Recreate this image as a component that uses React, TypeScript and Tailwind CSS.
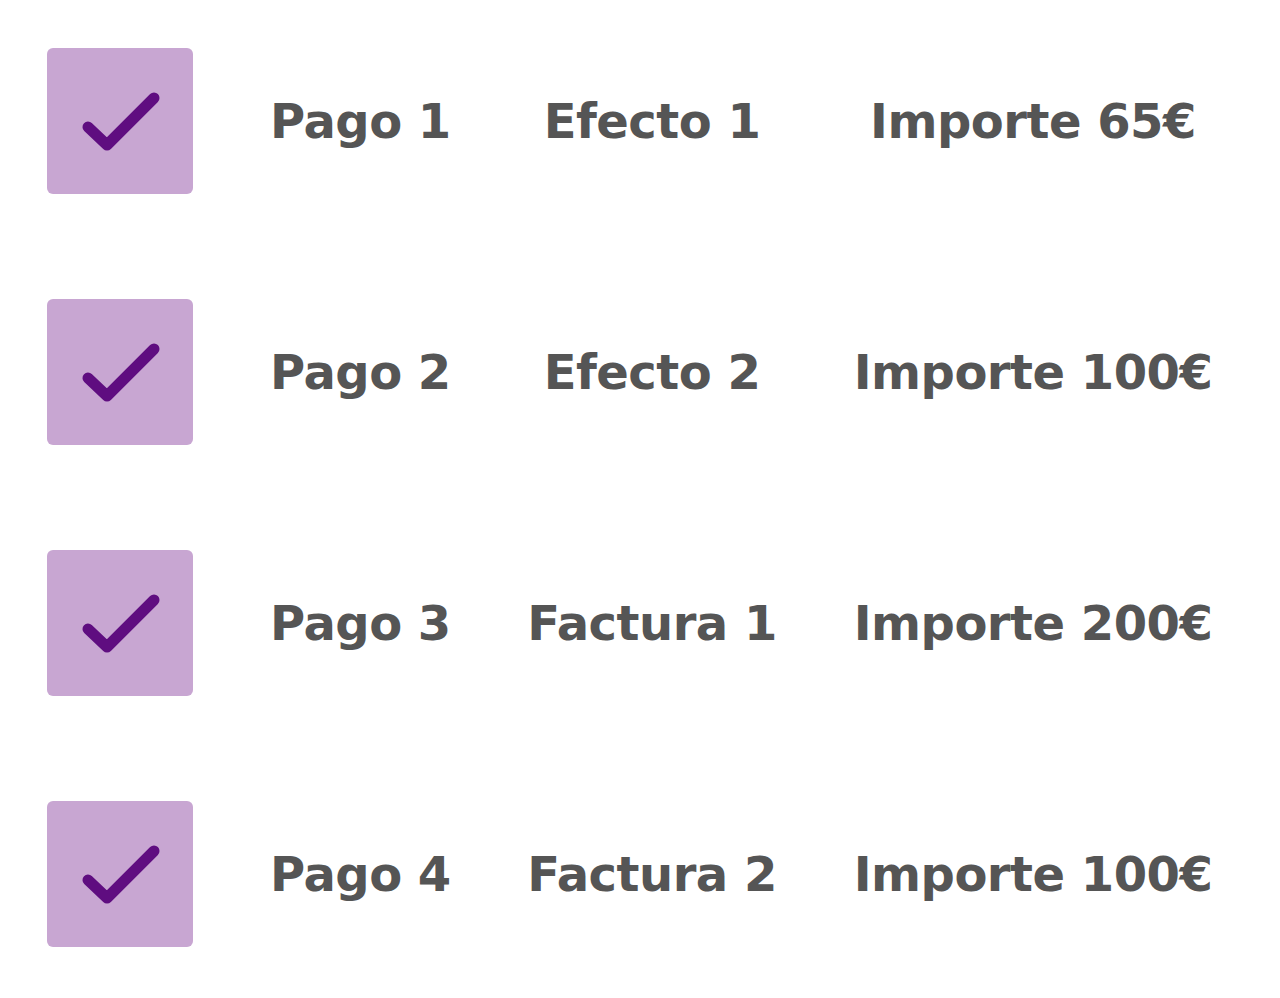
const rows = [
  { pago: 'Pago 1', doc: 'Efecto 1', importe: 'Importe 65€' },
  { pago: 'Pago 2', doc: 'Efecto 2', importe: 'Importe 100€' },
  { pago: 'Pago 3', doc: 'Factura 1', importe: 'Importe 200€' },
  { pago: 'Pago 4', doc: 'Factura 2', importe: 'Importe 100€' },
]

function CheckBox() {
  return (
    <div className="flex h-[146px] w-[146px] shrink-0 items-center justify-center rounded-[6px] bg-[#c8a6d2]">
      <svg width="146" height="146" viewBox="0 0 146 146">
        <path
          d="M41 79 L60 97 L107 50"
          fill="none"
          stroke="#5f0d80"
          strokeWidth="11"
          strokeLinecap="round"
          strokeLinejoin="round"
        />
      </svg>
    </div>
  )
}

export default function App() {
  return (
    <div className="flex h-[998px] w-[1280px] flex-col gap-[105px] bg-white pl-[47px] pt-[48px] font-['DejaVu_Sans',sans-serif] font-bold text-[#555555]">
      {rows.map((row) => (
        <div key={row.pago} className="flex items-center">
          <CheckBox />
          <div className="ml-[77px] w-[232px] text-[48px] leading-none tracking-[-0.5px]">{row.pago}</div>
          <div className="w-[300px] text-center text-[48px] leading-none tracking-[-0.5px]">{row.doc}</div>
          <div className="w-[462px] text-center text-[48px] leading-none tracking-[-0.5px]">{row.importe}</div>
        </div>
      ))}
    </div>
  )
}
